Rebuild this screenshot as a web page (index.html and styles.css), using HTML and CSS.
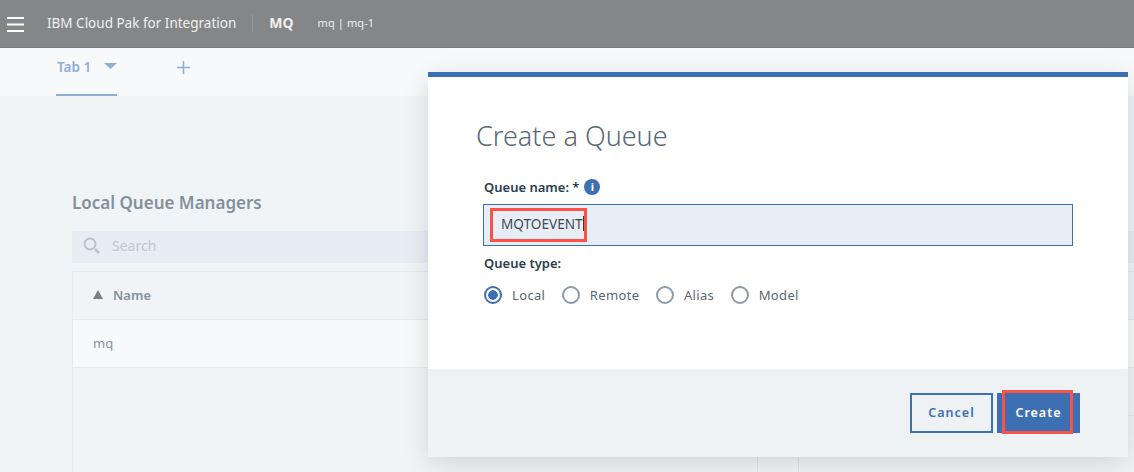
FILE: index.html
```html
<!DOCTYPE html>
<html>
<head>
    <title>Create a Queue</title>
    <link rel="stylesheet" href="styles.css">
</head>
<body>
    <header class="topbar">
        <svg class="menu-icon" width="17" height="15" viewBox="0 0 17 15"><path d="M0 1h17M0 7.500h17M0 14h17" stroke="#fff" stroke-width="2"/></svg>
        <span class="product">IBM Cloud Pak for Integration</span>
        <span class="app">MQ</span>
        <span class="instance">mq | mq-1</span>
    </header>
    <div class="tabs">
        <div class="tab">
            <span>Tab 1</span>
            <svg width="13" height="6" viewBox="0 0 13 6"><path d="M0 0h13L6.500 6z" fill="#90add6"/></svg>
        </div>
        <svg class="tab-add" width="13" height="13" viewBox="0 0 13 13"><path d="M6.500 0v13M0 6.500h13" stroke="#90add6" stroke-width="1.500"/></svg>
    </div>
    <main class="content">
        <h2>Local Queue Managers</h2>
        <div class="search">
            <svg width="18" height="18" viewBox="0 0 18 18"><circle cx="7" cy="7" r="5.500" fill="none" stroke="#b9c1c8" stroke-width="1.800"/><path d="M12 12l4 4" stroke="#b9c1c8" stroke-width="2.600"/></svg>
            <span>Search</span>
        </div>
        <div class="table">
            <div class="row head">
                <div class="cell"><svg width="10" height="9" viewBox="0 0 10 9"><path d="M5 0l5 9H0z" fill="#7d7f82"/></svg>Name</div>
                <div class="cell"></div>
                <div class="cell"></div>
            </div>
            <div class="row body-row">
                <div class="cell">mq</div>
                <div class="cell"></div>
                <div class="cell"></div>
            </div>
            <div class="row empty">
                <div class="cell"></div>
                <div class="cell"></div>
                <div class="cell"><div class="side-row"></div></div>
            </div>
        </div>
    </main>

    <div class="modal">
        <div class="modal-body">
            <h1>Create a Queue</h1>
            <label class="field-label">Queue name: * <span class="info">i</span></label>
            <div class="text-input">MQTOEVENT<span class="caret"></span></div>
            <label class="field-label type-label">Queue type:</label>
            <div class="radios">
                <span class="radio checked">Local</span>
                <span class="radio">Remote</span>
                <span class="radio">Alias</span>
                <span class="radio">Model</span>
            </div>
        </div>
        <div class="modal-footer">
            <button class="btn btn-ghost">Cancel</button>
            <button class="btn btn-primary">Create</button>
        </div>
    </div>
    <div class="mark mark-name"></div>
    <div class="mark mark-create"></div>
</body>
</html>
```

FILE: styles.css
```css
html, body {
    height: 100%;
}
body {
    position: relative;
    margin: 0;
    overflow: hidden;
    background-color: #f0f4f7;
    font-family: "Noto Sans", Arial, sans-serif;
    color: #2f3d48;
}
.topbar {
    display: flex;
    align-items: center;
    height: 47px;
    background-color: #858688;
    border-bottom: 1px solid #7b7c7e;
    color: #f0f0f0;
}
.menu-icon {
    margin: 2px 0 0 7px;
}
.product {
    margin-left: 23px;
    padding-right: 16px;
    border-right: 1px solid #97989a;
    font-size: 13.500px;
    line-height: 17px;
}
.app {
    margin: 0 0 3px 16px;
    font-size: 14px;
    font-weight: 700;
}
.instance {
    margin: 0 0 2px 24px;
    font-size: 11px;
    letter-spacing: 0.1px;
}
.tabs {
    display: flex;
    height: 48px;
    background-color: #f8f9fb;
}
.tab {
    display: flex;
    gap: 13px;
    width: 61px;
    height: 48px;
    margin-left: 56px;
    padding: 0 0 8px 1px;
    box-sizing: border-box;
    border-bottom: 2px solid #90add6;
    align-items: center;
    font-size: 13.500px;
    font-weight: 600;
    color: #90add6;
    white-space: nowrap;
}
.tab svg {
    margin-bottom: 3px;
    flex: none;
}
.tab-add {
    margin: 13px 0 0 60px;
}
.content {
    padding: 95px 0 0 72px;
}
.content h2 {
    margin: 0 0 17px;
    height: 23px;
    font-size: 17px;
    line-height: 23px;
    font-weight: 600;
    color: #84919a;
}
.search {
    display: flex;
    align-items: center;
    gap: 11px;
    height: 32px;
    padding: 0 0 3px 11px;
    box-sizing: border-box;
    background-color: #e8ecf3;
    font-size: 14px;
    color: #c1c8ce;
}
.search svg {
    margin-top: 1px;
}
.table {
    margin-top: 8px;
    border-top: 1px solid #e6eaec;
    border-left: 1px solid #e6eaec;
    height: 210px;
}
.row {
    display: grid;
    grid-template-columns: 684px 41px 1fr;
    border-bottom: 1px solid #e6eaec;
}
.cell {
    display: flex;
    align-items: center;
    gap: 10px;
    padding: 0 0 2px 20px;
    font-size: 13px;
}
.cell + .cell {
    border-left: 1px solid #dfe2e4;
}
.head {
    height: 47px;
}
.head .cell {
    font-weight: 600;
    color: #84919a;
}
.body-row {
    height: 47px;
    background-color: #f8f9fb;
}
.body-row .cell {
    color: #8a949c;
}
.empty {
    height: 120px;
    border-bottom: 0;
}
.empty .cell {
    align-items: flex-start;
    padding: 0;
}
.side-row {
    flex: 1;
    height: 47px;
    border-bottom: 1px solid #e6eaec;
}
.modal {
    position: absolute;
    left: 428px;
    top: 72px;
    width: 700px;
    height: 385px;
    display: flex;
    flex-direction: column;
    box-sizing: border-box;
    border-top: 5px solid #3d70b2;
    background-color: #fff;
    box-shadow: 0 6px 24px rgba(0, 0, 0, 0.13);
}
.modal-body {
    flex: 1;
    padding: 0 55px;
}
.modal h1 {
    margin: 43px 0 25px -7px;
    height: 32px;
    font-size: 27px;
    line-height: 32px;
    font-weight: 300;
    color: #5a6872;
}
.field-label {
    display: flex;
    align-items: center;
    gap: 5px;
    margin: 1px 0 0 1px;
    height: 20px;
    font-size: 13px;
    font-weight: 600;
    color: #2f3d48;
}
.info {
    display: inline-block;
    width: 16px;
    height: 16px;
    border-radius: 50%;
    background-color: #3d70b2;
    color: #fff;
    font-size: 11px;
    font-weight: 700;
    line-height: 16px;
    text-align: center;
}
.text-input {
    display: flex;
    align-items: center;
    height: 42px;
    margin-top: 7px;
    box-sizing: border-box;
    padding: 0 0 3px 17px;
    width: 590px;
    border: 1px solid #3d70b2;
    background-color: #e9eef6;
    font-size: 13.600px;
    color: #3d4a54;
}
.caret {
    width: 1px;
    height: 15px;
    background-color: #2f3d48;
}
.type-label {
    margin-top: 7px;
}
.radios {
    display: flex;
    margin: 13px 0 0 1px;
}
.radio {
    display: flex;
    align-items: center;
    gap: 10px;
    margin-right: 16.500px;
    font-size: 13px;
    letter-spacing: 0.35px;
    color: #5a6872;
}
.radio::before {
    content: "";
    width: 14px;
    height: 14px;
    border: 2px solid #8c9ba5;
    border-radius: 50%;
    background-color: #fff;
}
.checked::before {
    border-color: #3d70b2;
    background: radial-gradient(circle, #3d70b2 0 4.500px, #fff 5px);
}
.modal-footer {
    display: flex;
    justify-content: flex-end;
    align-items: flex-start;
    gap: 4px;
    height: 88px;
    box-sizing: border-box;
    padding: 24px 48px 0 0;
    background-color: #eff2f5;
}
.btn {
    width: 83px;
    height: 40px;
    padding: 0 0 2px;
    border: 2px solid #3d70b2;
    font-family: inherit;
    font-size: 12.500px;
    font-weight: 600;
    letter-spacing: 1px;
}
.btn-ghost {
    background-color: transparent;
    color: #3d70b2;
}
.btn-primary {
    background-color: #3d70b2;
    color: #fff;
}
.mark {
    position: absolute;
    box-sizing: border-box;
    border: 3px solid #fa5246;
}
.mark-name {
    left: 490px;
    top: 208px;
    width: 97px;
    height: 34px;
}
.mark-create {
    left: 1002px;
    top: 390px;
    width: 71px;
    height: 44px;
}
```
